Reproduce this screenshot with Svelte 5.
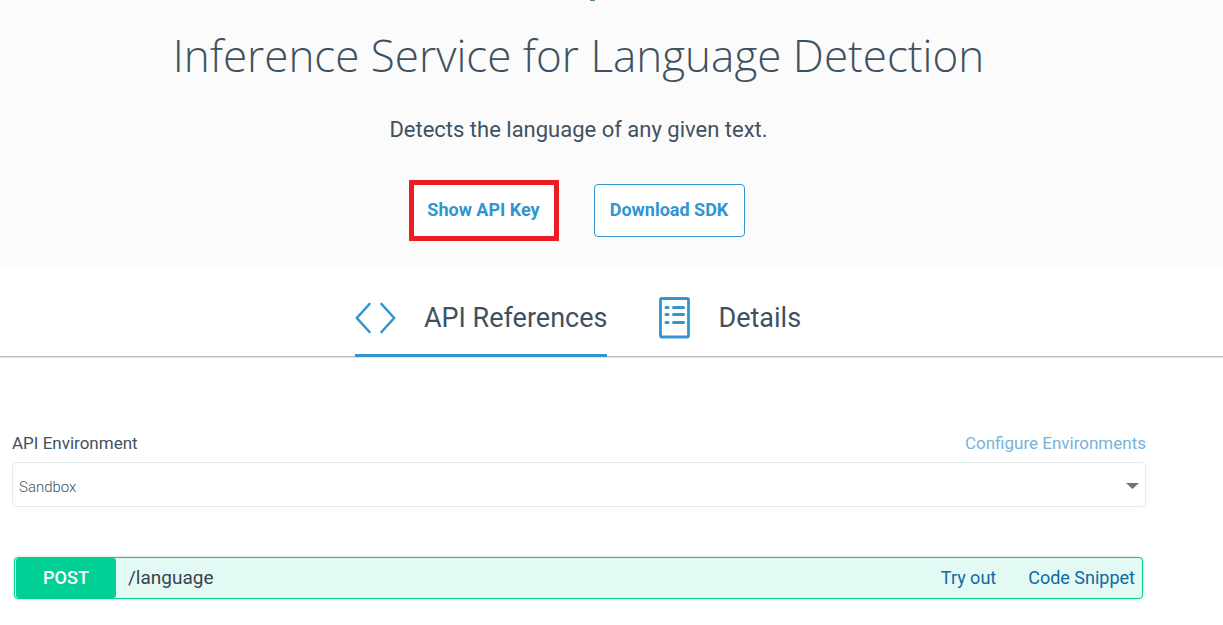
<script>
  const environments = ['Sandbox'];
  let environment = $state('Sandbox');
  let tab = $state('api');
</script>

<div class="page">
  <header class="hero">
    <span class="mark" aria-hidden="true"></span>
    <h1>Inference Service for Language Detection</h1>
    <p>Detects the language of any given text.</p>
    <div class="actions">
      <button class="btn marked" type="button">Show API Key</button>
      <button class="btn" type="button">Download SDK</button>
    </div>
  </header>

  <nav class="tabs">
    <button type="button" class="tab" class:active={tab === 'api'} onclick={() => (tab = 'api')}>
      <svg width="41" height="32" viewBox="0 0 41 32" aria-hidden="true">
        <path d="M14.5 2 1.8 16 14.5 30M26.5 2 39.2 16 26.5 30" fill="none" stroke="currentColor" stroke-width="2.6" stroke-linecap="round" stroke-linejoin="round" />
      </svg>
      <span>API References</span>
    </button>
    <button type="button" class="tab" class:active={tab === 'details'} onclick={() => (tab = 'details')}>
      <svg width="31" height="42" viewBox="0 0 31 42" aria-hidden="true">
        <rect x="1.5" y="1.5" width="28" height="38.5" rx="1.2" fill="none" stroke="currentColor" stroke-width="2.8" />
        <path d="M7 10.5h2M7 17.5h2M7 25.5h2M14.5 10.5h10M14.5 17.5h10M14.5 25.5h10" fill="none" stroke="currentColor" stroke-width="3" stroke-linecap="round" />
      </svg>
      <span>Details</span>
    </button>
  </nav>

  <main>
    <div class="labels">
      <label for="environment">API Environment</label>
      <a class="configure" href="#configure">Configure Environments</a>
    </div>
    <div class="select">
      <select id="environment" bind:value={environment}>
        {#each environments as name}
          <option value={name}>{name}</option>
        {/each}
      </select>
      <svg class="arrow" width="13" height="6" viewBox="0 0 13 6" aria-hidden="true">
        <path d="M0 0h13L6.5 6z" fill="#717376" />
      </svg>
    </div>

    <section class="operation">
      <span class="method">POST</span>
      <span class="path">/language</span>
      <a href="#try">Try out</a>
      <a href="#snippet">Code Snippet</a>
    </section>
  </main>
</div>

<style>
  :global(body) {
    margin: 0;
    background: #fff;
  }

  .page {
    font-family: Roboto, "Open Sans", sans-serif;
    font-size: 17px;
    line-height: 24px;
    color: #3f5161;
  }

  button,
  select {
    font: inherit;
    color: inherit;
    cursor: pointer;
  }

  a {
    color: #0f69a6;
    text-decoration: none;
  }

  .hero {
    position: relative;
    box-sizing: border-box;
    padding: 24px 66px 31px 0;
    background: #fbfbfb;
    text-align: center;
  }

  .mark {
    position: absolute;
    top: 0;
    left: 590px;
    width: 5px;
    height: 1px;
    background: #5584a6;
  }

  h1 {
    margin: 0;
    font-family: "Open Sans", sans-serif;
    font-size: 44px;
    font-weight: 300;
    line-height: 62px;
  }

  p {
    margin: 28px 0 38px;
    font-size: 22px;
    line-height: 32px;
  }

  .actions {
    display: flex;
    justify-content: center;
    gap: 39px;
  }

  .btn {
    box-sizing: border-box;
    min-width: 151px;
    padding: 12px 12px 14px;
    border: 1px solid #3095d0;
    border-radius: 4px;
    background: #fff;
    color: #3095d0;
    font-size: 18px;
    font-weight: 700;
    line-height: 25px;
  }

  .marked {
    min-width: 142px;
    outline: 5px solid #ed1c24;
    outline-offset: -1px;
    border-radius: 0;
  }

  .tabs {
    display: flex;
    justify-content: center;
    gap: 52px;
    padding-right: 67px;
    border-bottom: 1px solid #bbbdbe;
    box-shadow: 0 1px 1px #e5e5e5;
  }

  .tab {
    display: flex;
    align-items: center;
    gap: 28px;
    box-sizing: border-box;
    height: 89px;
    margin-bottom: -1px;
    padding: 13px 0 0;
    border: 0;
    border-bottom: 3px solid transparent;
    background: none;
    font-size: 27px;
    line-height: 36px;
  }

  .tab.active {
    border-bottom-color: #3095d0;
  }

  .tab svg {
    color: #3095d0;
  }

  main {
    padding: 74px 77px 26px 12px;
  }

  .labels {
    display: flex;
    justify-content: space-between;
    margin-bottom: 7px;
  }

  .configure {
    color: #79b1d9;
  }

  .select {
    position: relative;
  }

  select {
    display: block;
    appearance: none;
    box-sizing: border-box;
    width: 100%;
    height: 45px;
    padding: 4px 30px 0 6px;
    border: 1px solid #e8ebeb;
    border-radius: 4px;
    background: #fff;
    font-size: 15px;
    font-weight: 300;
  }

  .arrow {
    position: absolute;
    top: 21px;
    right: 7px;
    pointer-events: none;
  }

  .operation {
    display: flex;
    align-items: center;
    gap: 32px;
    margin: 50px 3px 0 2px;
    padding: 0 7px 0 1px;
    border: 1px solid #00d096;
    border-radius: 4px;
    background: #e3f9f4;
    box-shadow: 0 0 3px rgba(0, 0, 0, 0.2);
    font-size: 18px;
  }

  .method {
    box-sizing: border-box;
    min-width: 100px;
    padding: 8px 0;
    border-radius: 3px;
    background: #00d096;
    color: #fff;
    font-weight: 500;
    text-align: center;
  }

  .path {
    flex: 1;
    margin-left: -20px;
    color: #3b4151;
    font-size: 19px;
  }
</style>
